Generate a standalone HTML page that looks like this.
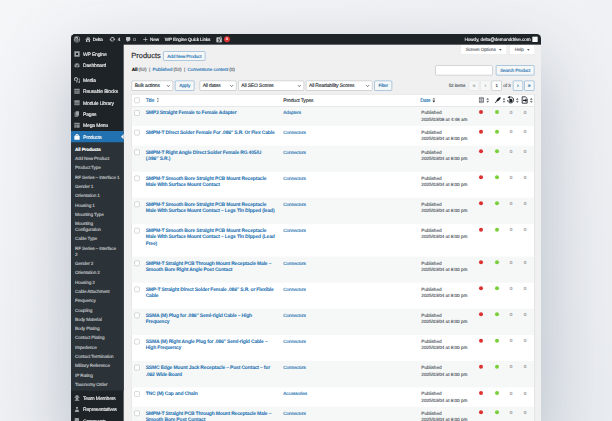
<!DOCTYPE html>
<html lang="en">
<head>
<meta charset="utf-8">
<title>Products</title>
<style>
*{box-sizing:border-box;margin:0;padding:0}
html,body{width:612px;height:421px;overflow:hidden}
body{font-family:"Liberation Sans",sans-serif;background:linear-gradient(150deg,#f5f6f8 0%,#eff1f4 50%,#eaedf1 100%);position:relative}
#shadow{position:absolute;left:71px;top:34px;width:470px;height:400px;border-radius:4px 4px 0 0;box-shadow:0 28px 75px rgba(55,75,100,.31)}
#win{-webkit-text-stroke:.4px;text-rendering:geometricPrecision;position:absolute;left:71px;top:34px;width:1410px;height:1170px;transform:scale(.333333);transform-origin:0 0;background:#f0f0f1;border-radius:13px 13px 0 0;overflow:hidden;font-size:13px;line-height:1.4;color:#3c434a}
a{text-decoration:none;color:#2271b1}
/* admin bar */
#bar{z-index:2;position:absolute;left:0;top:0;width:100%;height:32px;background:#1d2327;color:#f0f0f1;font-size:14px;letter-spacing:-.45px;line-height:32px;white-space:nowrap}
#bar .it{position:absolute;top:0;height:32px;font-weight:400}
#bar svg{position:absolute;top:6px;fill:#c3c4c7}
/* sidebar */
#menu{position:absolute;left:0;top:0;width:158px;bottom:0;background:#1d2327;padding-top:43px}
#menu .m{position:relative;height:34px;line-height:38px;padding-left:36px;color:#f0f0f1;font-size:15px;letter-spacing:-.45px;font-weight:400;white-space:nowrap}
#menu .m svg{position:absolute;left:8px;top:7px;width:20px;height:20px;fill:#9ca1a6}
#menu .sep{height:10px}
#menu .m.cur{background:#2271b1;color:#fff}
#menu .m.cur svg{fill:#fff}
#menu .m.cur:after{content:"";position:absolute;right:0;top:9px;border:8px solid transparent;border-right-color:#f0f0f1}
#sub{background:#2c3338;padding:7px 0 4px;margin-bottom:5px}
#sub div{padding:5px 12px;font-size:14px;letter-spacing:-.45px;line-height:17.92px;color:#c3c7cb;font-weight:400;white-space:nowrap}
#sub div.c{color:#fff;font-weight:700}
/* content */
#main{position:absolute;left:160px;top:32px;right:0;bottom:0}
.tab{position:absolute;top:0;height:31px;padding-left:15px;text-align:left !important;background:#fff;border:1px solid #c3c4c7;border-top:none;border-radius:0 0 4px 4px;font-size:14px;letter-spacing:-.45px;line-height:29px;color:#646970;white-space:nowrap}.tab i{position:absolute;right:13px;top:13px;border:4px solid transparent;border-top:5px solid #50575e;border-bottom:0}
h1{position:absolute;left:21px;top:19px;font-size:22.4px;font-weight:400;line-height:30px;color:#1d2327}
.pta{position:absolute;left:117px;top:20px;height:28px;line-height:26px;width:126px;text-align:center;padding:0;padding:0 10px;border:1px solid #2271b1;border-radius:3px;background:#f6f7f7;color:#2271b1;font-size:14px;letter-spacing:-.45px;font-weight:400;white-space:nowrap}
.subsub{position:absolute;left:22px;top:63px;font-size:14px;line-height:22px;color:#646970;white-space:nowrap}
.subsub b{color:#000;font-weight:700}
.subsub a{font-weight:400}
.btn{position:absolute;height:30px;line-height:28px;padding:0 10px;border:1px solid #2271b1;border-radius:3px;background:#f6f7f7;color:#2271b1;font-size:14px;letter-spacing:-.45px;font-weight:400;white-space:nowrap;text-align:center}
.inp{position:absolute;height:30px;border:1px solid #8c8f94;border-radius:4px;background:#fff}
.sel{position:absolute;height:30px;border:1px solid #8c8f94;border-radius:3px;background:#fff;font-size:15px;letter-spacing:-.45px;line-height:28px;padding-left:8px;color:#2c3338;white-space:nowrap;font-weight:400}
.sel svg{position:absolute;right:5px;top:7px;width:16px;height:16px}
.pg{position:absolute;top:108px;height:30px;min-width:30px;border:1px solid #dcdcde;border-radius:3px;background:#f6f7f7;color:#a7aaad;font-size:16px;line-height:26px;text-align:center}
.pg.on{border-color:#2271b1;color:#2271b1}
.cnt{position:absolute;top:108px;line-height:30px;font-size:14px;letter-spacing:-.45px;color:#50575e;white-space:nowrap;font-weight:400}
/* table */
table{position:absolute;left:21px;top:148px;width:1209px;border:1px solid #c3c4c7;background:#fff;border-collapse:separate;border-spacing:0;table-layout:fixed}
th{height:36px;border-bottom:1px solid #c3c4c7;text-align:left;font-weight:400;font-size:15px;letter-spacing:-.45px;padding:0 10px;color:#2c3338;vertical-align:middle;white-space:nowrap;position:relative}
th a{font-weight:400}
td{vertical-align:top;padding:10px 10px 6px;font-size:14px;letter-spacing:-.45px;line-height:19.5px;color:#50575e;font-weight:400}
tr.o td{background:#f6f7f7}
td.t a{-webkit-text-stroke:.1px;display:block;font-size:15px;letter-spacing:-.52px;font-weight:700;line-height:19.6px;white-space:nowrap}
td.t{padding-bottom:29.2px;padding-left:8px}
.cb{display:block;width:16px;height:16px;border:1px solid #8c8f94;border-radius:4px;background:#fff;margin:2px 0 0 8px}
td.c,th.c{padding:10px 0 0 0}
th.c{padding:0}
th.c .cb{margin-top:0}
.dot{display:block;width:12px;height:12px;border-radius:50%;margin:1px 0 0 0}
.r{background:#dc3232}.g{background:#7ad03a}
td.n{color:#8c8f94;padding:8px 0 0 8.5px}td.d{padding-left:13px;letter-spacing:-.1px}td.k{padding-left:9px}
</style>
</head>
<body>
<div id="shadow"></div>
<div id="win">
<div id="bar">
<svg style="left:8px;top:6px" width="20" height="20" viewBox="0 0 20 20"><path fill-rule="evenodd" d="M10 0.5a9.5 9.5 0 1 0 0 19a9.5 9.5 0 0 0 0-19zm0 1.3a8.2 8.2 0 1 1 0 16.400a8.200 8.200 0 0 1 0-16.400zM3 7.200l3.300 9.100a7.300 7.300 0 0 1-3.300-9.100zm10.900 2.100c0-.9-.3-1.500-.6-2-.4-.6-.7-1.100-.7-1.700 0-.7.500-1.300 1.200-1.300h.1a7.300 7.300 0 0 0-11 1.400h.5c.800 0 1.900-.1 1.900-.1.400 0 .4.600.1.600 0 0-.4.100-.8.100l2.600 7.800 1.600-4.700-1.100-3.100c-.4 0-.8-.1-.8-.1-.4 0-.3-.6.100-.600 0 0 1.200.1 1.900.100.800 0 1.900-.1 1.900-.1.400 0 .4.600.1.600 0 0-.4.100-.8.100l2.600 7.700.7-2.400c.3-1 .5-1.700.5-2.300zm-3.800.900l-2.200 6.300a7.300 7.300 0 0 0 4.500-.1l-.1-.1zm6.200-4.100c0 .1 0 .5 0 .700 0 .700-.1 1.400-.5 2.400l-2.200 6.400a7.300 7.300 0 0 0 2.700-9.500z"/></svg>
<svg style="left:41px;top:6px" width="20" height="20" viewBox="0 0 20 20"><path d="M16 8.500l1.530 1.530-1.060 1.060L10 4.620l-6.470 6.470-1.060-1.060L10 2.500l4 4v-2h2v4zm-6-2.460l6 5.990V18H4v-5.970zM12 17v-5H8v5h4z"/></svg>
<div class="it" style="left:65px">Delta</div>
<svg style="left:114px;top:6px" width="20" height="20" viewBox="0 0 20 20"><path d="M10.200 3.280c3.530 0 6.430 2.610 6.920 6h2.080l-3.500 4-3.500-4h2.320c-.45-1.970-2.210-3.450-4.320-3.450-1.450 0-2.730.71-3.540 1.780L4.950 5.660c1.230-1.460 3.110-2.380 5.250-2.380zm-.4 13.440c-3.520 0-6.430-2.610-6.920-6H.8l3.500-4c1.170 1.330 2.330 2.670 3.500 4H5.480c.45 1.970 2.210 3.450 4.320 3.450 1.450 0 2.730-.71 3.540-1.780l1.710 1.950c-1.240 1.460-3.120 2.380-5.250 2.380z"/></svg>
<div class="it" style="left:140px">4</div>
<svg style="left:162px;top:7px" width="20" height="20" viewBox="0 0 20 20"><path d="M5 2h9c1.100 0 2 .9 2 2v7c0 1.100-.9 2-2 2h-2l-5 5v-5H5c-1.100 0-2-.9-2-2V4c0-1.100.9-2 2-2z"/></svg>
<div class="it" style="left:187px;color:#a7aaad;font-weight:400">0</div>
<svg style="left:214px;top:7px" width="18" height="18" viewBox="0 0 20 20"><path d="M17 9v2h-6v6H9v-6H3V9h6V3h2v6h6z"/></svg>
<div class="it" style="left:237px">New</div>
<div class="it" style="left:281px">WP Engine Quick Links</div>
<svg style="left:435px;top:6px" width="20" height="20" viewBox="0 0 20 20"><path fill="#c3c4c7" d="M3.500 3.500h9l1.700-3h2.300l-1.800 3h.3c1.400 0 2.500 1.100 2.500 2.500v13.500h-14c-1.400 0-2.500-1.100-2.500-2.500v-11c0-1.400 1.100-2.500 2.500-2.500z"/><path fill="#1d2327" d="M13.200 4.500l-3.300 8.200-1.700-4.700h-2.200l2.700 7.300c-.5 1.200-1 1.700-2.200 1.800v1.700c2.200-.1 3.300-1.100 4.300-3.700l4.300-10.600z"/></svg>
<div style="position:absolute;left:459px;top:7px;width:18px;height:18px;border-radius:9px;background:#dc3232;color:#fff;font-size:11px;font-weight:700;line-height:18px;text-align:center">1</div>
<div class="it" style="right:31px;letter-spacing:-.25px">Howdy, delta@demanddrive.com</div>
<div style="position:absolute;right:10px;top:8px;width:16px;height:16px;background:#f6f7f7"></div>
</div>
<div id="menu"><div class="m"><svg viewBox="0 0 20 20"><path d="M2 2h16v16H2zM7 7v6h6V7z" fill-rule="evenodd"/></svg>WP Engine</div><div class="m"><svg viewBox="0 0 20 20"><path d="M3.760 16h12.480A7.997 7.997 0 0 0 10 3a7.997 7.997 0 0 0-6.240 13zM10 4c.55 0 1 .45 1 1s-.45 1-1 1-1-.45-1-1 .45-1 1-1zM6 6c.55 0 1 .45 1 1s-.45 1-1 1-1-.45-1-1 .45-1 1-1zm8 0c.55 0 1 .45 1 1s-.45 1-1 1-1-.45-1-1 .45-1 1-1zm-5.370 5.550L12 7v6c0 1.100-.9 2-2 2s-2-.9-2-2c0-.57.240-1.080.630-1.450zM4 10c.55 0 1 .45 1 1s-.45 1-1 1-1-.45-1-1 .45-1 1-1zm12 0c.55 0 1 .45 1 1s-.45 1-1 1-1-.45-1-1 .45-1 1-1z"/></svg>Dashboard</div><div class="sep"></div><div class="m"><svg viewBox="0 0 20 20"><path d="M13 11V4c0-.55-.45-1-1-1h-1.670L9 1H5L3.670 3H2c-.55 0-1 .45-1 1v7c0 .55.450 1 1 1h10c.55 0 1-.45 1-1zM7 4.500a3 3 0 1 1 0 6 3 3 0 0 1 0-6zM14 6h5v10.500a2.500 2.500 0 1 1-2-2.450V8h-3V6zM7 13.500h6v1.950c-.320-.26-.71-.45-1.140-.45h-.72A2.500 2.500 0 1 0 13 18.500H7z"/></svg>Media</div><div class="m"><svg viewBox="0 0 20 20"><rect x="2" y="2.500" width="16" height="15" rx="1" fill="#8a8f94"/><path d="M2 7.500h16M2 12.500h16M9 7.500v5" stroke="#1d2327" stroke-width="1.200" fill="none"/></svg>Reusable Blocks</div><div class="m"><svg viewBox="0 0 20 20"><rect x="2" y="2.500" width="16" height="15" rx="1" fill="#8a8f94"/><path d="M2 11h16" stroke="#1d2327" stroke-width="1.400" fill="none"/><path d="M2 14h16" stroke="#1d2327" stroke-width=".8" fill="none"/></svg>Module Library</div><div class="m"><svg viewBox="0 0 20 20"><path d="M6 15V2h10v13H6zm-1 1h8v2H3V5h2v11z"/></svg>Pages</div><div class="m"><svg viewBox="0 0 20 20"><rect x="2" y="2.500" width="16" height="15" rx="1" fill="#8a8f94"/><path d="M2 7.500h16M7.500 7.500v10" stroke="#1d2327" stroke-width="1.300" fill="none"/></svg>Mega Menu</div><div class="m cur"><svg viewBox="0 0 20 20"><path d="M4.800 7.500V7a5.200 5.200 0 0 1 10.400 0v.5H16.500a1.500 1.500 0 0 1 1.500 1.500v8.500a1.500 1.500 0 0 1-1.500 1.500h-13A1.500 1.500 0 0 1 2 17.500V9a1.500 1.500 0 0 1 1.500-1.500zm3 0h4.400V7a2.200 2.200 0 0 0-4.400 0z" fill-rule="evenodd"/></svg>Products</div><div id="sub"><div class=c>All Products</div><div>Add New Product</div><div>Product Type</div><div>RF Series – Interface 1</div><div>Gender 1</div><div>Orientation 1</div><div>Housing 1</div><div>Mounting Type</div><div>Mounting<br>Configuration</div><div>Cable Type</div><div>RF Series – Interface<br>2</div><div>Gender 2</div><div>Orientation 2</div><div>Housing 2</div><div>Cable Attachment</div><div>Frequency</div><div>Coupling</div><div>Body Material</div><div>Body Plating</div><div>Contact Plating</div><div>Impedence</div><div>Contact Termination</div><div>Military Reference</div><div>IP Rating</div><div>Taxonomy Order</div></div><div class="m"><svg viewBox="0 0 20 20"><path d="M10 2c3 0 5 1.500 5 4v1h2.500v2h-15V7H5V6c0-2.500 2-4 5-4zM5.500 10h9c0 2.500-2 4.500-4.500 4.500S5.500 12.500 5.500 10zM2.500 18.500c0-2.500 3-4 7.500-4s7.500 1.500 7.500 4z"/></svg>Team Members</div><div class="m"><svg viewBox="0 0 20 20"><path d="M10 2a3.500 3.500 0 1 1 0 7 3.500 3.500 0 0 1 0-7zM4 18c0-5 2-8 4-8l2 3 2-3c2 0 4 3 4 8z"/></svg>Representatives</div><div class="m"><svg viewBox="0 0 20 20"><path d="M5 2h9c1.100 0 2 .9 2 2v7c0 1.100-.9 2-2 2h-2l-5 5v-5H5c-1.100 0-2-.9-2-2V4c0-1.100.9-2 2-2z"/></svg>Comments</div></div>
<div id="main">
<div class="tab" style="left:1008px;width:138px">Screen Options<i></i></div>
<div class="tab" style="left:1155px;width:75px">Help<i></i></div>
<h1>Products</h1>
<div class="pta">Add New Product</div>
<div class="subsub" style="letter-spacing:-.25px"><b>All</b> (52)&nbsp; | &nbsp;<a>Published</a> (52)&nbsp; | &nbsp;<a>Cornerstone content</a> (0)</div>
<div class="inp" style="left:933px;top:62px;width:172px"></div>
<div class="btn" style="left:1115px;top:62px;width:115px;padding:0">Search Product</div>
<div class="sel" style="left:22px;top:108px;width:124px">Bulk actions<svg viewBox="0 0 20 20"><path d="M5 7l5 5 5-5" fill="none" stroke="#2c3338" stroke-width="2.600"/></svg></div>
<div class="btn" style="left:152px;top:108px;width:58px">Apply</div>
<div class="sel" style="left:226px;top:108px;width:110px">All dates<svg viewBox="0 0 20 20"><path d="M5 7l5 5 5-5" fill="none" stroke="#2c3338" stroke-width="2.600"/></svg></div>
<div class="sel" style="left:342px;top:108px;width:197px">All SEO Scores<svg viewBox="0 0 20 20"><path d="M5 7l5 5 5-5" fill="none" stroke="#2c3338" stroke-width="2.600"/></svg></div>
<div class="sel" style="left:545px;top:108px;width:199px">All Readability Scores<svg viewBox="0 0 20 20"><path d="M5 7l5 5 5-5" fill="none" stroke="#2c3338" stroke-width="2.600"/></svg></div>
<div class="btn" style="left:750px;top:108px;width:53px;padding:0">Filter</div>
<div class="cnt" style="left:973px">52 items</div>
<div class="pg" style="left:1034px">&laquo;</div>
<div class="pg" style="left:1068px">&lsaquo;</div>
<div class="inp" style="left:1102px;top:108px;width:30px;text-align:center;line-height:28px;font-size:13px;color:#2c3338">1</div>
<div class="cnt" style="left:1137px">of 3</div>
<div class="pg on" style="left:1166px;left:1166px">&rsaquo;</div>
<div class="pg on" style="left:1200px">&raquo;</div>
<table>
<colgroup><col style="width:34px"><col style="width:411px"><col style="width:411px"><col style="width:177px"><col style="width:48px"><col style="width:45px"><col style="width:42px"><col style="width:39px"></colgroup>
<thead><tr><th class="c"><span class="cb"></span></th><th style="padding-left:8px"><a>Title</a><svg width="9" height="16" viewBox="0 0 9 16" style="margin-left:6px;vertical-align:-3px"><path d="M4.500 1l3.800 5h-7.600zM4.500 15l3.800-5h-7.600z" fill="#787c82"/></svg></th><th>Product Types</th><th><a>Date</a><svg width="9" height="16" viewBox="0 0 9 16" style="margin-left:6px;vertical-align:-3px"><path d="M4.500 1.500l3.500 4.500h-7z" fill="#787c82" stroke="#787c82" stroke-width="1" stroke-linejoin="round"/><path d="M4.500 14.500l3.500-4.500h-7z" fill="#1d2327" stroke="#1d2327" stroke-width="1" stroke-linejoin="round"/></svg></th>
<th><svg width="16" height="20" viewBox="0 0 16 20" style="position:absolute;left:8px;top:7px"><rect x="1.500" y="1.500" width="13" height="17" rx="2.500" fill="#dcdcde" stroke="#50575e" stroke-width="2"/><path d="M1.500 6h13M1.500 14h13M8 6v8" stroke="#50575e" stroke-width="1.600"/></svg><svg width="8" height="16" viewBox="0 0 8 16" style="position:absolute;left:31px;top:10px"><path d="M4 1.500l3.500 4h-7zM4 14.500l3.500-4h-7z" fill="#50575e" stroke="#50575e" stroke-width="1" stroke-linejoin="round"/></svg></th>
<th><svg width="20" height="20" viewBox="0 0 20 20" style="position:absolute;left:7px;top:7px"><path d="M19 1c-4 0-9 3.500-11.500 8L5 14l1.500 1.500 5-2.500c4.500-2.500 7.500-7 7.500-12zM5 14.500l-4 4 1.500 1.500 4-4z" fill="#1d2327"/></svg><svg width="8" height="16" viewBox="0 0 8 16" style="position:absolute;left:32px;top:10px"><path d="M4 1.500l3.500 4h-7zM4 14.500l3.500-4h-7z" fill="#50575e" stroke="#50575e" stroke-width="1" stroke-linejoin="round"/></svg></th>
<th><svg width="24" height="24" viewBox="0 0 24 24" style="position:absolute;left:-1px;top:5px"><path d="M7.500 4.200A9 9 0 1 1 3 12" fill="none" stroke="#1d2327" stroke-width="2.600"/><path d="M10 0L2.500 3.500 9 8.500z" fill="#1d2327"/><path d="M8 8h6l3.500 3.500V19H8z" fill="#1d2327"/></svg><svg width="8" height="16" viewBox="0 0 8 16" style="position:absolute;left:27px;top:10px"><path d="M4 1.500l3.500 4h-7zM4 14.500l3.500-4h-7z" fill="#50575e" stroke="#50575e" stroke-width="1" stroke-linejoin="round"/></svg></th>
<th><svg width="22" height="24" viewBox="0 0 22 24" style="position:absolute;left:0px;top:5px"><path d="M3.500 2.500h10l5 5v14h-15z" fill="none" stroke="#1d2327" stroke-width="2.600"/><path d="M6 11h7V7.500l6 5.500-6 5.500V15H6z" fill="#1d2327"/></svg><svg width="8" height="16" viewBox="0 0 8 16" style="position:absolute;left:27px;top:10px"><path d="M4 1.500l3.500 4h-7zM4 14.500l3.500-4h-7z" fill="#50575e" stroke="#50575e" stroke-width="1" stroke-linejoin="round"/></svg></th>
</tr></thead><tbody><tr class=o><td class="c"><span class="cb"></span></td><td class="t"><a>SMP3 Straight Female to Female Adapter</a></td><td><a>Adapters</a></td><td class="d">Published<br>2025/03/08 at 4:48 am</td><td class="k"><span class="dot r"></span></td><td class="k"><span class="dot g"></span></td><td class="n">0</td><td class="n">0</td></tr><tr><td class="c"><span class="cb"></span></td><td class="t"><a>SMPM-T Direct Solder Female For .086″ S.R. Or Flex Cable</a></td><td><a>Connectors</a></td><td class="d">Published<br>2025/03/04 at 8:00 pm</td><td class="k"><span class="dot r"></span></td><td class="k"><span class="dot g"></span></td><td class="n">0</td><td class="n">0</td></tr><tr class=o><td class="c"><span class="cb"></span></td><td class="t"><a>SMPM-T Right Angle Direct Solder Female RG 405/U<br>(.086″ S.R.)</a></td><td><a>Connectors</a></td><td class="d">Published<br>2025/03/04 at 8:00 pm</td><td class="k"><span class="dot r"></span></td><td class="k"><span class="dot g"></span></td><td class="n">0</td><td class="n">0</td></tr><tr><td class="c"><span class="cb"></span></td><td class="t"><a>SMPM-T Smooth Bore Straight PCB Mount Receptacle<br>Male With Surface Mount Contact</a></td><td><a>Connectors</a></td><td class="d">Published<br>2025/03/04 at 8:00 pm</td><td class="k"><span class="dot r"></span></td><td class="k"><span class="dot g"></span></td><td class="n">0</td><td class="n">0</td></tr><tr class=o><td class="c"><span class="cb"></span></td><td class="t"><a>SMPM-T Smooth Bore Straight PCB Mount Receptacle<br>Male With Surface Mount Contact – Legs Tin Dipped (lead)</a></td><td><a>Connectors</a></td><td class="d">Published<br>2025/03/04 at 8:00 pm</td><td class="k"><span class="dot r"></span></td><td class="k"><span class="dot g"></span></td><td class="n">0</td><td class="n">0</td></tr><tr><td class="c"><span class="cb"></span></td><td class="t"><a>SMPM-T Smooth Bore Straight PCB Mount Receptacle<br>Male With Surface Mount Contact – Legs Tin Dipped (Lead<br>Free)</a></td><td><a>Connectors</a></td><td class="d">Published<br>2025/03/04 at 8:00 pm</td><td class="k"><span class="dot r"></span></td><td class="k"><span class="dot g"></span></td><td class="n">0</td><td class="n">0</td></tr><tr class=o><td class="c"><span class="cb"></span></td><td class="t"><a>SMPM-T Straight PCB Through Mount Receptacle Male –<br>Smooth Bore Right Angle Post Contact</a></td><td><a>Connectors</a></td><td class="d">Published<br>2025/03/04 at 8:00 pm</td><td class="k"><span class="dot r"></span></td><td class="k"><span class="dot g"></span></td><td class="n">0</td><td class="n">0</td></tr><tr><td class="c"><span class="cb"></span></td><td class="t"><a>SMP-T Straight Direct Solder Female .086″ S.R. or Flexible<br>Cable</a></td><td><a>Connectors</a></td><td class="d">Published<br>2025/03/04 at 8:00 pm</td><td class="k"><span class="dot r"></span></td><td class="k"><span class="dot g"></span></td><td class="n">0</td><td class="n">0</td></tr><tr class=o><td class="c"><span class="cb"></span></td><td class="t"><a>SSMA (M) Plug for .086″ Semi-rigid Cable – High<br>Frequency</a></td><td><a>Connectors</a></td><td class="d">Published<br>2025/03/04 at 8:00 pm</td><td class="k"><span class="dot r"></span></td><td class="k"><span class="dot g"></span></td><td class="n">0</td><td class="n">0</td></tr><tr><td class="c"><span class="cb"></span></td><td class="t"><a>SSMA (M) Right Angle Plug for .086″ Semi-rigid Cable –<br>High Frequency</a></td><td><a>Connectors</a></td><td class="d">Published<br>2025/03/04 at 8:00 pm</td><td class="k"><span class="dot r"></span></td><td class="k"><span class="dot g"></span></td><td class="n">0</td><td class="n">0</td></tr><tr class=o><td class="c"><span class="cb"></span></td><td class="t"><a>SSMC Edge Mount Jack Receptacle – Post Contact – for<br>.062 Wide Board</a></td><td><a>Connectors</a></td><td class="d">Published<br>2025/03/04 at 8:00 pm</td><td class="k"><span class="dot r"></span></td><td class="k"><span class="dot g"></span></td><td class="n">0</td><td class="n">0</td></tr><tr><td class="c"><span class="cb"></span></td><td class="t"><a>TNC (M) Cap and Chain</a></td><td><a>Accessories</a></td><td class="d">Published<br>2025/03/04 at 8:00 pm</td><td class="k"><span class="dot r"></span></td><td class="k"><span class="dot g"></span></td><td class="n">0</td><td class="n">0</td></tr><tr class=o><td class="c"><span class="cb"></span></td><td class="t"><a>SMPM-T Straight PCB Through Mount Receptacle Male –<br>Smooth Bore Post Contact</a></td><td><a>Connectors</a></td><td class="d">Published<br>2025/03/04 at 8:00 pm</td><td class="k"><span class="dot r"></span></td><td class="k"><span class="dot g"></span></td><td class="n">0</td><td class="n">0</td></tr></tbody></table></div>
</div>
</body>
</html>
